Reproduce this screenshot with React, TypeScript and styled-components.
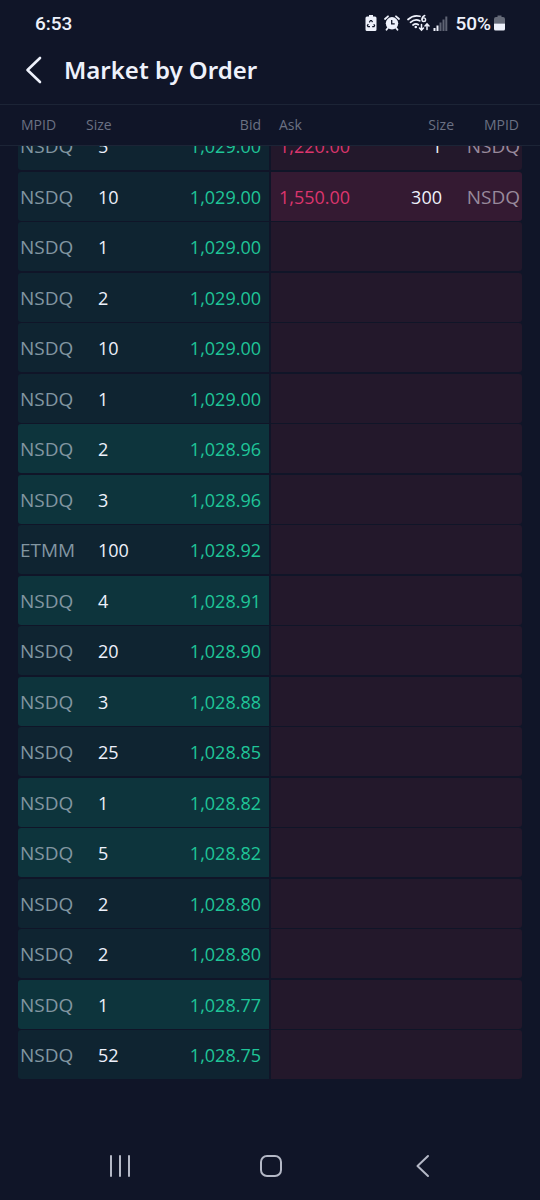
import React from "react";
import styled, { createGlobalStyle } from "styled-components";

const color = {
  page: "#101528",
  line: "#1c2436",
  text: "#eef1fb",
  heading: "#6b7183",
  bid: "#1fc598",
  ask: "#dc356d",
  bidRow: "#0f2431",
  bidRowStrong: "#0d343c",
  askRow: "#23182b",
  askRowStrong: "#341a32",
  bidMpid: "#8296a1",
  askMpid: "#988a9c",
  nav: "#b4b8c6",
};

const GlobalStyle = createGlobalStyle`
  * { box-sizing: border-box; }
  body {
    margin: 0;
    background: ${color.page};
    color: ${color.text};
    font-family: "Open Sans", "Noto Sans", sans-serif;
  }
`;

const Screen = styled.div`
  display: flex;
  flex-direction: column;
  min-height: 100vh;
`;

const StatusBar = styled.div`
  display: flex;
  align-items: center;
  justify-content: space-between;
  height: 46px;
  padding: 0 35px;
`;

const StatusText = styled.span`
  padding-top: 2px;
  font: 500 19px/24px Roboto, sans-serif;
`;

const StatusIcons = styled.div`
  display: flex;
  align-items: center;
  gap: 7px;
`;

const StatusPair = styled.div`
  display: flex;
  align-items: center;
  gap: 3px;
`;

const StatusGlyph = styled.svg`
  display: block;
  flex: none;
`;

const TitleBar = styled.header`
  display: flex;
  align-items: center;
  gap: 16px;
  height: 58px;
  padding: 0 20px 10px;
`;

const IconButton = styled.button`
  display: flex;
  align-items: center;
  justify-content: center;
  width: 28px;
  height: 32px;
  padding: 0;
  border: 0;
  background: none;
  color: inherit;
  cursor: pointer;
`;

const Title = styled.h1`
  margin: 0;
  font: 600 24px/32px "Noto Sans", sans-serif;
`;

const Book = styled.table`
  display: block;
`;

const BookHead = styled.thead`
  display: block;
  position: relative;
  z-index: 1;
  padding: 0 18px;
  border-top: 1px solid ${color.line};
  border-bottom: 1px solid ${color.line};
  background: ${color.page};
`;

const BookBody = styled.tbody`
  display: block;
  margin-top: -25px;
  padding: 0 18px;
`;

const Row = styled.tr`
  display: grid;
  grid-template-columns: 68px 1fr 1fr 1fr 1fr 68px;

  ${BookBody} & {
    margin-bottom: 1px;
  }
  ${BookBody} &:nth-child(odd) {
    margin-bottom: 2px;
  }
`;

const HeadCell = styled.th<{ $end?: boolean; $inset?: number }>`
  padding: 0 ${(p) => p.$inset ?? 0}px;
  text-align: ${(p) => (p.$end ? "right" : "left")};
  font-size: 14px;
  font-weight: 400;
  line-height: 40px;
  color: ${color.heading};
`;

const Cell = styled.td<{ $side: "bid" | "ask"; $strong?: boolean }>`
  height: 49px;
  padding: 0;
  font-size: 18px;
  line-height: 50px;
  white-space: nowrap;
  text-align: ${(p) => (p.$side === "bid" ? "left" : "right")};
  background: ${(p) =>
    p.$side === "bid"
      ? p.$strong ? color.bidRowStrong : color.bidRow
      : p.$strong ? color.askRowStrong : color.askRow};
`;

const MpidCell = styled(Cell)`
  padding: 0 2px;
  font-size: 19px;
  color: ${(p) => (p.$side === "bid" ? color.bidMpid : color.askMpid)};
  border-radius: ${(p) => (p.$side === "bid" ? "3px 0 0 3px" : "0 3px 3px 0")};
`;

const SizeCell = styled(Cell)`
  padding: 0 12px;
`;

const PriceCell = styled(Cell)`
  padding: 0 8px;
  text-align: ${(p) => (p.$side === "bid" ? "right" : "left")};
  color: ${(p) => (p.$side === "bid" ? color.bid : color.ask)};
  margin: ${(p) => (p.$side === "bid" ? "0 1px 0 0" : "0 0 0 1px")};
`;

const NavBar = styled.nav`
  display: flex;
  justify-content: space-around;
  align-items: center;
  height: 68px;
  margin-top: auto;
  padding: 0 42px 0 44px;
  color: ${color.nav};
`;

type Order = { mpid: string; size: string; price: string; strong?: boolean };

const order = (size: number, price: string, strong = false, mpid = "NSDQ"): Order => ({
  mpid,
  size: String(size),
  price,
  strong,
});

const bids: Order[] = [
  order(5, "1,029.00"),
  order(10, "1,029.00"),
  order(1, "1,029.00"),
  order(2, "1,029.00"),
  order(10, "1,029.00"),
  order(1, "1,029.00"),
  order(2, "1,028.96", true),
  order(3, "1,028.96", true),
  order(100, "1,028.92", false, "ETMM"),
  order(4, "1,028.91", true),
  order(20, "1,028.90"),
  order(3, "1,028.88", true),
  order(25, "1,028.85"),
  order(1, "1,028.82", true),
  order(5, "1,028.82", true),
  order(2, "1,028.80"),
  order(2, "1,028.80"),
  order(1, "1,028.77", true),
  order(52, "1,028.75"),
];

const asks: Order[] = [order(1, "1,220.00"), order(300, "1,550.00", true)];

function BatterySaverIcon() {
  return (
    <StatusGlyph width="12" height="16" viewBox="0 0 12 16" aria-hidden="true">
      <path d="M4 0h4v1.500h2q1.500 0 1.500 1.500v11.500q0 1.500-1.500 1.500H2Q.5 16 .5 14.500V3Q.5 1.500 2 1.500h2z" fill={color.text} />
      <g fill="none" stroke={color.page} strokeWidth="1.200">
        <path d="M4.300 7.400 5.500 5.500h1l1 1.600" />
        <path d="m8.800 9.200.8 1.400-.6 1.100H7.200" />
        <path d="M5 11.700H3l-.6-1.100.9-1.500" />
      </g>
    </StatusGlyph>
  );
}

function AlarmIcon() {
  return (
    <StatusGlyph width="16" height="16" viewBox="0 0 16 16" aria-hidden="true">
      <circle cx="8" cy="8.300" r="6.200" fill={color.text} />
      <path d="M1 4 4 1.300M15 4 12 1.300M3.800 13 2.500 14.800M12.200 13l1.300 1.800" stroke={color.text} strokeWidth="1.800" strokeLinecap="round" />
      <path d="M7.700 5v3.800h3" fill="none" stroke={color.page} strokeWidth="1.300" />
    </StatusGlyph>
  );
}

function WifiIcon() {
  return (
    <StatusGlyph width="23" height="18" viewBox="0 0 23 18" fill="none" stroke={color.text} strokeLinecap="round" aria-hidden="true">
      <path d="M1 5.500Q6.500.5 13 2.300M3.500 8.300Q8 4.500 12.700 6.800M6 11q2.800-2.200 5.300-.3" strokeWidth="1.700" />
      <circle cx="8.800" cy="13" r="1.300" fill={color.text} stroke="none" />
      <path d="M17.800 1.500Q15 2.500 15 5.500" strokeWidth="1.400" />
      <circle cx="16.800" cy="5.700" r="1.800" strokeWidth="1.400" />
      <path d="M14.500 10.500v5.500m-2-2 2 2.200 2-2.200M20 15.500V10m-2 2 2-2.200 2 2.200" strokeWidth="1.500" />
    </StatusGlyph>
  );
}

function SignalIcon() {
  return (
    <StatusGlyph width="15" height="15" viewBox="0 0 15 15" aria-hidden="true">
      <path d="M.5 12h2v3h-2zM3.500 9.500h2V15h-2z" fill={color.text} />
      <path d="M6.500 6.500h2V15h-2zM9.500 3.500h2V15h-2zM12.300.5h2V15h-2z" fill="#5f6474" />
    </StatusGlyph>
  );
}

function BatteryIcon() {
  return (
    <StatusGlyph width="11" height="16" viewBox="0 0 11 16" aria-hidden="true">
      <path d="M3.500.5h4v1.500H9q2 0 2 2v4.500H0V4q0-2 2-2h1.500z" fill="#656a78" />
      <path d="M0 8.500h11V14q0 1.500-1.500 1.500h-8Q0 15.500 0 14z" fill={color.text} />
    </StatusGlyph>
  );
}

export default function App() {
  return (
    <Screen>
      <GlobalStyle />
      <StatusBar>
        <StatusText>6:53</StatusText>
        <StatusIcons>
          <BatterySaverIcon />
          <AlarmIcon />
          <StatusPair>
            <WifiIcon />
            <SignalIcon />
          </StatusPair>
          <StatusPair>
            <StatusText>50%</StatusText>
            <BatteryIcon />
          </StatusPair>
        </StatusIcons>
      </StatusBar>

      <TitleBar>
        <IconButton type="button" aria-label="Back">
          <svg width="28" height="32" viewBox="0 0 28 32" fill="none" stroke="currentColor" strokeWidth="2.600" strokeLinecap="round" strokeLinejoin="round">
            <path d="M20 4 7.500 16 20 28" />
          </svg>
        </IconButton>
        <Title>Market by Order</Title>
      </TitleBar>

      <Book>
        <BookHead>
          <Row>
            <HeadCell scope="col" $inset={3}>MPID</HeadCell>
            <HeadCell scope="col">Size</HeadCell>
            <HeadCell scope="col" $end $inset={9}>Bid</HeadCell>
            <HeadCell scope="col" $inset={9}>Ask</HeadCell>
            <HeadCell scope="col" $end>Size</HeadCell>
            <HeadCell scope="col" $end $inset={3}>MPID</HeadCell>
          </Row>
        </BookHead>
        <BookBody>
          {bids.map((bid, i) => {
            const ask = asks[i];
            return (
              <Row key={i}>
                <MpidCell $side="bid" $strong={bid.strong}>{bid.mpid}</MpidCell>
                <SizeCell $side="bid" $strong={bid.strong}>{bid.size}</SizeCell>
                <PriceCell $side="bid" $strong={bid.strong}>{bid.price}</PriceCell>
                <PriceCell $side="ask" $strong={ask?.strong}>{ask?.price}</PriceCell>
                <SizeCell $side="ask" $strong={ask?.strong}>{ask?.size}</SizeCell>
                <MpidCell $side="ask" $strong={ask?.strong}>{ask?.mpid}</MpidCell>
              </Row>
            );
          })}
        </BookBody>
      </Book>

      <NavBar aria-label="System">
        <IconButton type="button" aria-label="Recent apps">
          <svg width="28" height="28" viewBox="0 0 28 28" fill="none" stroke="currentColor" strokeWidth="2" strokeLinecap="round">
            <path d="M5 4v20M14 4v20M23 4v20" />
          </svg>
        </IconButton>
        <IconButton type="button" aria-label="Home">
          <svg width="28" height="28" viewBox="0 0 28 28" fill="none" stroke="currentColor" strokeWidth="2">
            <rect x="4" y="4" width="20" height="20" rx="6" />
          </svg>
        </IconButton>
        <IconButton type="button" aria-label="Back">
          <svg width="28" height="28" viewBox="0 0 28 28" fill="none" stroke="currentColor" strokeWidth="2" strokeLinecap="round" strokeLinejoin="round">
            <path d="M20 4 9.500 14 20 24" />
          </svg>
        </IconButton>
      </NavBar>
    </Screen>
  );
}
